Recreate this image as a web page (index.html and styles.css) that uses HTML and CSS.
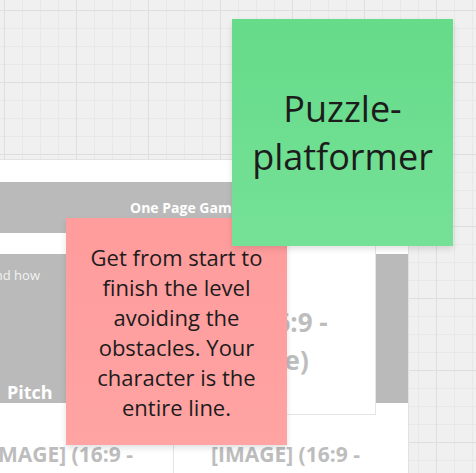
FILE: index.html
```html
<!DOCTYPE html>
<html lang="en">
<head>
    <meta charset="UTF-8">
    <meta name="viewport" content="width=device-width, initial-scale=1.0">
    <title>Board</title>
    <link rel="stylesheet" href="styles.css">
</head>
<body>
    <div class="board">
        <!-- template frame, partly off screen -->
        <div class="card">
            <div class="card-title">One Page Game Design</div>

            <div class="pitch-row">
                <div class="pitch-side">
                    <p class="pitch-hint"><span>Describe the game and how</span></p>
                    <h3 class="pitch-label">Pitch</h3>
                </div>
                <div class="image-box">[IMAGE] (16:9 - Landscape)</div>
            </div>

            <div class="image-row">
                <div class="image-cell">[IMAGE] (16:9 - Landscape)</div>
                <div class="image-cell divider">[IMAGE] (16:9 - Landscape)</div>
            </div>
        </div>

        <!-- sticky notes -->
        <div class="sticky sticky-pink">Get from start to finish the level avoiding the obstacles. Your character is the entire line.</div>
        <div class="sticky sticky-green">Puzzle-platformer</div>
    </div>
</body>
</html>
```

FILE: styles.css
```css
* {
    margin: 0;
    padding: 0;
    box-sizing: border-box;
}

body {
    font-family: 'Open Sans', 'Liberation Sans', sans-serif;
    background-color: #f0f0f0;
    overflow: hidden;
}

/* Fundo quadriculado do quadro */
.board {
    position: relative;
    width: 476px;
    height: 473px;
    overflow: hidden;
    background-color: #f0f0f0;
    background-image:
        linear-gradient(#dedede 1px, transparent 1px),
        linear-gradient(90deg, #dedede 1px, transparent 1px),
        linear-gradient(#e8e8e8 1px, transparent 1px),
        linear-gradient(90deg, #e8e8e8 1px, transparent 1px);
    background-size: 72px 72px, 72px 72px, 18px 18px, 18px 18px;
    background-position: 0 10px, 4px 0, 0 10px, 4px 0;
}

/* Cartao do template */
.card {
    position: absolute;
    left: -49px;
    top: 160px;
    width: 457px;
    height: 400px;
    background-color: white;
    box-shadow: 0 0 0 1px #e2e2e2;
    padding-top: 22px;
}

.card-title {
    height: 51px;
    background-color: #bababa;
    color: white;
    font-weight: 700;
    font-size: 14px;
    display: flex;
    align-items: center;
    padding-left: 179px;
}

.pitch-row {
    display: flex;
    height: 149px;
    margin-top: 21px;
    padding-right: 32px;
    background-color: #bababa;
}

.pitch-side {
    width: 144px;
    display: flex;
    flex-direction: column;
    justify-content: space-between;
    overflow: hidden;
}

/* texto longo sai pela esquerda, fora da tela */
.pitch-hint {
    display: flex;
    justify-content: flex-end;
    font-size: 13px;
    line-height: 17px;
    color: #f2f2f2;
    padding: 13px 55px 0 0;
}

.pitch-hint span {
    flex-shrink: 0;
    white-space: nowrap;
}

.pitch-label {
    font-size: 18px;
    line-height: 22px;
    font-weight: 700;
    color: white;
    padding-left: 56px;
}

.image-box {
    flex: 1;
    margin: -20px 0 -12px;
    background-color: white;
    border: 1px solid #e6e6e6;
    color: #bdbdbd;
    font-weight: 700;
    font-size: 26px;
    line-height: 38px;
    text-align: center;
    padding-top: 68px;
}

.image-row {
    display: flex;
    margin-top: 12px;
    height: 200px;
}

.image-cell {
    width: 222px;
    padding: 25px 0 0 33px;
    color: #bdbdbd;
    font-weight: 700;
    font-size: 21px;
    line-height: 28px;
}

.image-cell.divider {
    flex: 1;
    padding-left: 37px;
    border-left: 1px solid #e4e4e4;
}

/* Notas adesivas */
.sticky {
    position: absolute;
    width: 221px;
    height: 227px;
    display: flex;
    align-items: center;
    justify-content: center;
    text-align: center;
    color: #1c1c1c;
    box-shadow: 0 3px 6px rgba(0, 0, 0, 0.12);
}

.sticky-pink {
    left: 66px;
    top: 218px;
    padding: 0 16px;
    font-size: 22px;
    line-height: 30px;
    background: linear-gradient(#ff9c9c, #ffa3a3);
}

.sticky-green {
    left: 232px;
    top: 19px;
    padding: 0 12px;
    font-size: 36px;
    line-height: 48px;
    background: linear-gradient(#66db89, #75e197);
}
```
